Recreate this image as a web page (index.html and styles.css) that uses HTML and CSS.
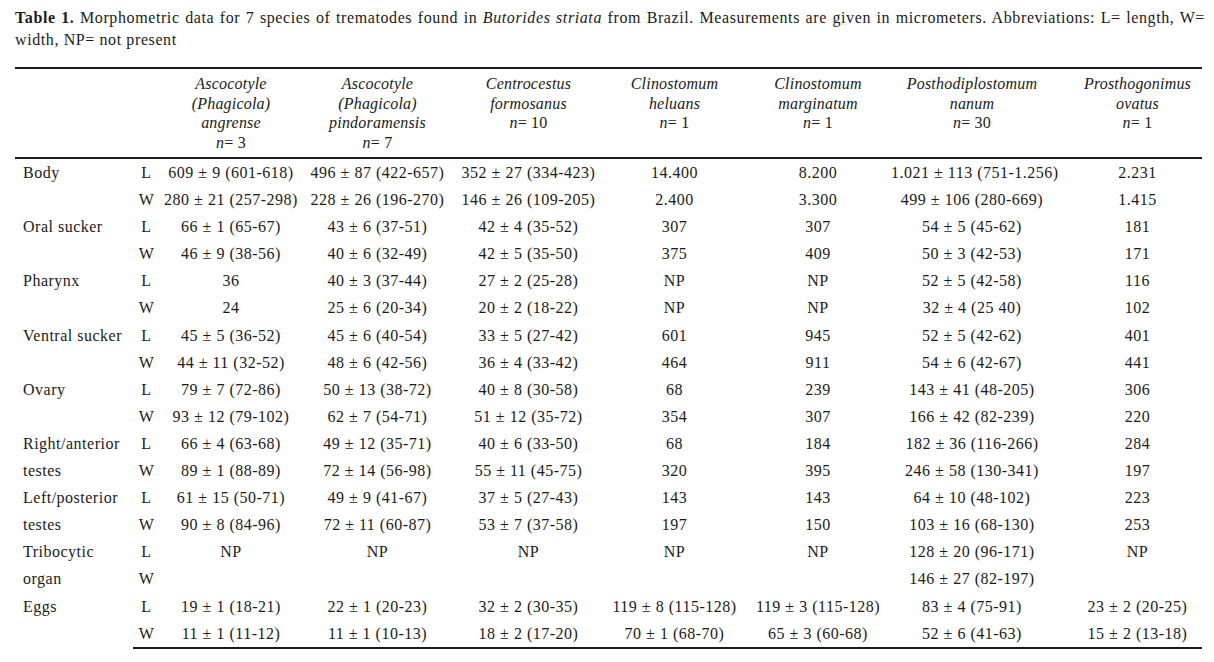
FILE: index.html
```html
<!DOCTYPE html>
<html>
<head>
<meta charset="utf-8">
<link rel="stylesheet" href="styles.css">
</head>
<body>
<div class="page">
<p class="caption"><b>Table 1.</b><span> Morphometric data for 7 species of trematodes found in </span><i>Butorides striata</i><span> from Brazil. Measurements are given in micrometers. Abbreviations: L= length, W= </span><span>width, NP= not present</span></p>
<table class="data">
<colgroup>
<col class="c-label"><col class="c-lw"><col class="c1"><col class="c2"><col class="c3"><col class="c4"><col class="c5"><col class="c6"><col class="c7">
</colgroup>
<thead>
<tr>
<th></th><th></th>
<th><i>Ascocotyle<br>(Phagicola)<br>angrense</i><br><i>n</i>= 3</th>
<th><i>Ascocotyle<br>(Phagicola)<br>pindoramensis</i><br><i>n</i>= 7</th>
<th><i>Centrocestus<br>formosanus</i><br><i>n</i>= 10</th>
<th><i>Clinostomum<br>heluans</i><br><i>n</i>= 1</th>
<th><i>Clinostomum<br>marginatum</i><br><i>n</i>= 1</th>
<th><i>Posthodiplostomum<br>nanum</i><br><i>n</i>= 30</th>
<th class="last"><i>Prosthogonimus<br>ovatus</i><br><i>n</i>= 1</th>
</tr>
</thead>
<tbody>
<tr><td class="label" rowspan="2">Body</td><td>L</td><td>609 ± 9 (601-618)</td><td>496 ± 87 (422-657)</td><td>352 ± 27 (334-423)</td><td>14.400</td><td>8.200</td><td>1.021 ± 113 (751-1.256)</td><td class="last">2.231</td></tr>
<tr><td>W</td><td>280 ± 21 (257-298)</td><td>228 ± 26 (196-270)</td><td>146 ± 26 (109-205)</td><td>2.400</td><td>3.300</td><td>499 ± 106 (280-669)</td><td class="last">1.415</td></tr>
<tr><td class="label" rowspan="2">Oral sucker</td><td>L</td><td>66 ± 1 (65-67)</td><td>43 ± 6 (37-51)</td><td>42 ± 4 (35-52)</td><td>307</td><td>307</td><td>54 ± 5 (45-62)</td><td class="last">181</td></tr>
<tr><td>W</td><td>46 ± 9 (38-56)</td><td>40 ± 6 (32-49)</td><td>42 ± 5 (35-50)</td><td>375</td><td>409</td><td>50 ± 3 (42-53)</td><td class="last">171</td></tr>
<tr><td class="label" rowspan="2">Pharynx</td><td>L</td><td>36</td><td>40 ± 3 (37-44)</td><td>27 ± 2 (25-28)</td><td>NP</td><td>NP</td><td>52 ± 5 (42-58)</td><td class="last">116</td></tr>
<tr><td>W</td><td>24</td><td>25 ± 6 (20-34)</td><td>20 ± 2 (18-22)</td><td>NP</td><td>NP</td><td>32 ± 4 (25 40)</td><td class="last">102</td></tr>
<tr><td class="label" rowspan="2">Ventral sucker</td><td>L</td><td>45 ± 5 (36-52)</td><td>45 ± 6 (40-54)</td><td>33 ± 5 (27-42)</td><td>601</td><td>945</td><td>52 ± 5 (42-62)</td><td class="last">401</td></tr>
<tr><td>W</td><td>44 ± 11 (32-52)</td><td>48 ± 6 (42-56)</td><td>36 ± 4 (33-42)</td><td>464</td><td>911</td><td>54 ± 6 (42-67)</td><td class="last">441</td></tr>
<tr><td class="label" rowspan="2">Ovary</td><td>L</td><td>79 ± 7 (72-86)</td><td>50 ± 13 (38-72)</td><td>40 ± 8 (30-58)</td><td>68</td><td>239</td><td>143 ± 41 (48-205)</td><td class="last">306</td></tr>
<tr><td>W</td><td>93 ± 12 (79-102)</td><td>62 ± 7 (54-71)</td><td>51 ± 12 (35-72)</td><td>354</td><td>307</td><td>166 ± 42 (82-239)</td><td class="last">220</td></tr>
<tr><td class="label" rowspan="2">Right/anterior testes</td><td>L</td><td>66 ± 4 (63-68)</td><td>49 ± 12 (35-71)</td><td>40 ± 6 (33-50)</td><td>68</td><td>184</td><td>182 ± 36 (116-266)</td><td class="last">284</td></tr>
<tr><td>W</td><td>89 ± 1 (88-89)</td><td>72 ± 14 (56-98)</td><td>55 ± 11 (45-75)</td><td>320</td><td>395</td><td>246 ± 58 (130-341)</td><td class="last">197</td></tr>
<tr><td class="label" rowspan="2">Left/posterior testes</td><td>L</td><td>61 ± 15 (50-71)</td><td>49 ± 9 (41-67)</td><td>37 ± 5 (27-43)</td><td>143</td><td>143</td><td>64 ± 10 (48-102)</td><td class="last">223</td></tr>
<tr><td>W</td><td>90 ± 8 (84-96)</td><td>72 ± 11 (60-87)</td><td>53 ± 7 (37-58)</td><td>197</td><td>150</td><td>103 ± 16 (68-130)</td><td class="last">253</td></tr>
<tr><td class="label" rowspan="2">Tribocytic organ</td><td>L</td><td>NP</td><td>NP</td><td>NP</td><td>NP</td><td>NP</td><td>128 ± 20 (96-171)</td><td class="last">NP</td></tr>
<tr><td>W</td><td></td><td></td><td></td><td></td><td></td><td>146 ± 27 (82-197)</td><td class="last"></td></tr>
<tr><td class="label" rowspan="2">Eggs</td><td>L</td><td>19 ± 1 (18-21)</td><td>22 ± 1 (20-23)</td><td>32 ± 2 (30-35)</td><td>119 ± 8 (115-128)</td><td>119 ± 3 (115-128)</td><td>83 ± 4 (75-91)</td><td class="last">23 ± 2 (20-25)</td></tr>
<tr><td>W</td><td>11 ± 1 (11-12)</td><td>11 ± 1 (10-13)</td><td>18 ± 2 (17-20)</td><td>70 ± 1 (68-70)</td><td>65 ± 3 (60-68)</td><td>52 ± 6 (41-63)</td><td class="last">15 ± 2 (13-18)</td></tr>
</tbody>
</table>
</div>
</body>
</html>
```
FILE: styles.css
```css
html, body {
  margin: 0;
  padding: 0;
  background: #ffffff;
}
body {
  padding: 7px 0 0 15px;
  font-family: "Liberation Serif", "Times New Roman", serif;
  color: #1a1a1a;
}
.page {
  width: 1190px;
}
.caption {
  margin: 0 0 16px 0;
  font-size: 16px;
  line-height: 22px;
  text-align: justify;
  letter-spacing: 0.6px;
}
.caption b {
  font-weight: bold;
}
.data {
  width: 1187px;
  border-collapse: collapse;
  table-layout: fixed;
  font-size: 16px;
  letter-spacing: 0.5px;
}
.c-label { width: 118px; }
.c-lw { width: 27px; }
.c1 { width: 142px; }
.c2 { width: 151px; }
.c3 { width: 151px; }
.c4 { width: 141px; }
.c5 { width: 146px; }
.c6 { width: 162px; }
.c7 { width: 149px; }
.data thead th {
  font-weight: normal;
  line-height: 19.5px;
  padding: 5px 0 5px 0;
  border-top: 2px solid #1a1a1a;
  border-bottom: 2px solid #1a1a1a;
  text-align: center;
  vertical-align: top;
  letter-spacing: 0.2px;
}
.data tbody td {
  padding: 0;
  line-height: 27.1px;
  text-align: center;
  vertical-align: top;
  white-space: nowrap;
}
.data tbody td.label {
  text-align: left;
  padding-left: 8px;
  white-space: normal;
}
.data thead th.last,
.data tbody td.last {
  padding-left: 20px;
}
.data tbody tr:last-child td {
  border-bottom: 2px solid #1a1a1a;
}
```
